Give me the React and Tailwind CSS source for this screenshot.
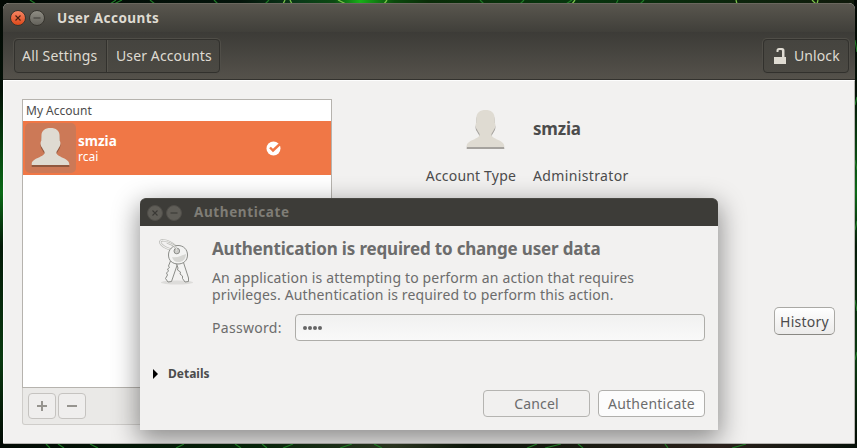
import React from "react";

function Wallpaper() {
  return (
    <svg className="absolute inset-0" width="857" height="448" viewBox="0 0 857 448" fill="none">
      <defs>
        <linearGradient id="top" x1="0" x2="1" y1="0" y2="0">
          <stop offset="0" stopColor="#020803" />
          <stop offset=".28" stopColor="#03130a" />
          <stop offset=".35" stopColor="#0a3a18" />
          <stop offset=".39" stopColor="#0c4a12" />
          <stop offset=".42" stopColor="#18b018" />
          <stop offset=".46" stopColor="#0a4a0c" />
          <stop offset=".5" stopColor="#0a2c08" />
          <stop offset=".66" stopColor="#06350d" />
          <stop offset="1" stopColor="#10190b" />
        </linearGradient>
        <linearGradient id="side" x1="0" x2="0" y1="0" y2="1">
          <stop offset="0" stopColor="#020803" />
          <stop offset=".2" stopColor="#031006" />
          <stop offset=".43" stopColor="#0b6a16" />
          <stop offset=".55" stopColor="#041a08" />
          <stop offset=".8" stopColor="#0a3a10" />
          <stop offset="1" stopColor="#020803" />
        </linearGradient>
        <linearGradient id="bottom" x1="0" x2="1" y1="0" y2="0">
          <stop offset="0" stopColor="#020a04" />
          <stop offset=".3" stopColor="#06240a" />
          <stop offset=".46" stopColor="#2a3420" />
          <stop offset=".55" stopColor="#0c160a" />
          <stop offset=".84" stopColor="#2a211b" />
          <stop offset="1" stopColor="#08120a" />
        </linearGradient>
      </defs>
      <path d="M0 0H857V448H0Z" fill="#071307" />
      <path d="M0 0H857V4H0Z" fill="url(#top)" />
      <path d="M0 0H4V448H0Z" fill="url(#side)" />
      <path d="M854 0H857V448H854Z" fill="url(#side)" />
      <path d="M0 444H857V448H0Z" fill="url(#bottom)" />
      <g stroke="#1f7a26" strokeWidth="1.2">
        <path d="M30 0l6 4M110 4l6-4M122 0l-8 4M150 0l5 4M214 0l4 4M265 4l4-4M480 0l4 4M520 4l4-4M566 4l6-4M618 0l-2 4M640 4l4-4" />
        <path d="M46 444l4 4M58 444l6 4M90 444l8 4M176 448l8-4M235 444l6 4M262 444l5 4M283 448l10-4M340 448l12-4M374 444l8 4M527 448l10-4M545 448l16-4M578 444l5 4M665 444l3 4M732 448l14-4" />
        <path d="M855 40l2 12M855 105l2-8M855 160l2 10M855 230l2-9M855 300l2 11M855 360l2-8" />
      </g>
      <g stroke="#7ac248" strokeWidth="1.3">
        <path d="M283 4l2-4M290 0l2 4M338 0l8 4M384 4l3-4M572 4l3-4M736 0l1 4M812 0l4 4M817 4l1-4" />
      </g>
    </svg>
  );
}

function WindowButton({ kind, tone }) {
  const styles = {
    orange: "bg-linear-to-b from-[#f68461] to-[#dd4814] border-[#37352f] text-[#4a2010]",
    gray: "bg-linear-to-b from-[#8f8d84] to-[#64625b] border-[#37352f] text-[#3c3b37]",
    dim: "bg-[#5f5d57] border-[#504e49] text-[#3a3935]",
  };
  return (
    <span className={"flex size-4 items-center justify-center rounded-full border " + styles[tone]}>
      <svg width="8" height="8" viewBox="0 0 8 8" stroke="currentColor" strokeWidth="1.1">
        {kind === "close" ? <path d="M1.5 1.5l5 5M6.5 1.5l-5 5" /> : <path d="M.5 4h7" />}
      </svg>
    </span>
  );
}

function Person({ shadow }) {
  const body =
    "M19.500 0C14 0 10.600 2.500 10.400 7.500L10.200 13C9.200 14 9.300 17.500 11 19.500C12 22 13.300 22.800 13.600 24.500C13.500 29.500 1.200 29.500 .7 36V37H38.300V36C37.800 29.500 25.500 29.500 25.400 24.500C25.700 22.800 27 22 28 19.500C29.700 17.500 29.800 14 28.800 13L28.600 7.500C28.400 2.500 25 0 19.500 0Z";
  return (
    <svg width="39" height="40" viewBox="0 0 39 40">
      <path d={body} transform="translate(0 2)" fill={shadow} />
      <path d={body} fill="#dfdbd2" />
    </svg>
  );
}

function Keys() {
  return (
    <svg width="40" height="48" viewBox="0 0 40 48" fill="none">
      <ellipse cx="19" cy="43.500" rx="16" ry="2" fill="#dddcda" />
      <ellipse cx="10" cy="6" rx="8.500" ry="3.300" transform="rotate(25 10 6)" stroke="#b9b9b5" strokeWidth="2.400" />
      <ellipse cx="10" cy="6" rx="8.500" ry="3.300" transform="rotate(25 10 6)" stroke="#eeeeec" strokeWidth="1.100" />
      <g stroke="#8b8c88" strokeWidth="1" strokeLinejoin="round">
        <path d="M12.500 22L10.500 27L11.500 28.500L9.500 30L10.500 32L8.500 34L9.500 36L7.500 39.500L10 43L13.500 42.500L19.500 25Z" fill="#f3f3f2" />
        <path d="M18.500 24.500L20 29L19.500 31L22.500 33L22 35L24.500 37L24.500 39.500L27 43L30.500 42.500L30.500 39L25 22Z" fill="#f3f3f2" />
        <path d="M20 6.500C14.500 6.500 10.500 10.500 10.500 16C10.500 21.500 14.500 25 20 25C25.500 25 29.500 21.500 29.500 16C29.500 10.500 25.500 6.500 20 6.500Z" fill="#f3f3f2" />
        <circle cx="18.800" cy="12" r="2.800" fill="#cfcfcc" />
      </g>
      <path d="M14 18C19 19.500 24 16 28 15C27.500 20.500 25 23 20 23C17 23 15 21 14 18Z" fill="#d6d6d3" />
      <path d="M9 3.500C15 5.500 19.500 8 18.800 12" stroke="#b5b5b0" strokeWidth="2.200" />
      <path d="M9 3.500C15 5.500 19.500 8 18.800 12" stroke="#f0f0ee" strokeWidth="1" />
    </svg>
  );
}

function MainWindow() {
  return (
    <div className="relative flex h-[441px] w-[852px] flex-col overflow-hidden rounded-t-[6px] rounded-b-[2px] bg-[#f2f1f0]">
      <header className="flex h-[29px] shrink-0 items-center border-t border-[#6a675e] bg-linear-to-b from-[#59564e] to-[#403f3a] pl-[7px]">
        <WindowButton kind="close" tone="orange" />
        <span className="w-[3px]" />
        <WindowButton kind="minimize" tone="gray" />
        <span className="ml-3 text-[13.5px] font-bold tracking-[0.44px] whitespace-nowrap text-[#dfdbd2]">User Accounts</span>
      </header>
      <nav className="flex h-12 shrink-0 items-center justify-between border-b border-[#33322e] bg-linear-to-b from-[#3c3b37] to-[#55524b] pr-[6px] pl-[11px] text-[14px] text-[#dfdbd2]">
        <div className="flex h-[34px] overflow-hidden rounded-[4px] border border-[#32312d] bg-linear-to-b from-[#45443f] to-[#4b4943] shadow-[0_0_0_1px_#504e48]">
          <span className="flex w-[92px] items-center border-r border-[#32312d] pl-[7px] tracking-[0.2px]">All Settings</span>
          <span className="flex w-[112px] items-center border-l border-[#56544d] pl-[8px] tracking-[0.12px]">User Accounts</span>
        </div>
        <div className="flex h-[34px] w-[86px] items-center rounded-[4px] border border-[#32312d] bg-linear-to-b from-[#45443f] to-[#4b4943] pl-[10px] shadow-[0_0_0_1px_#504e48]">
          <svg width="13" height="16" viewBox="0 0 13 16" fill="#dfdbd2">
            <path d="M0 9H12V16H0ZM2.500 4V2.500Q2.500 0 5 0H8Q10.500 0 10.500 2.500V9H8V3Q8 2 7 2H5.500Q4.500 2 4.500 3V4Z" />
          </svg>
          <span className="ml-[7px] tracking-[0.1px]">Unlock</span>
        </div>
      </nav>
      <main className="flex min-h-0 flex-1 border border-t-[#fdfdfd] border-r-[#b8b6b3] border-b-[#b8b6b3] border-l-[#fdfdfd] pt-[18px] pl-[18px]">
        <section className="w-[310px] shrink-0">
          <div className="h-[289px] border border-[#b6b3ae] bg-white">
            <div className="h-[21px] pl-[3px] text-[12px] leading-[21px] text-[#4c4c4c]">My Account</div>
            <div className="flex h-[54px] items-center bg-[#f07746] text-white">
              <div className="ml-[2px] flex h-[50px] w-[51px] items-center justify-center rounded-[5px] bg-[#cc7957]">
                <Person shadow="#90583f" />
              </div>
              <div className="ml-[2px] flex-1 pt-[2px]">
                <div className="text-[13.5px] leading-[16px] font-bold">smzia</div>
                <div className="text-[12px] leading-[16px]">rcai</div>
              </div>
              <svg className="mr-[50px]" width="15" height="15" viewBox="0 0 15 15">
                <circle cx="7.500" cy="7.500" r="7" fill="#fff" />
                <path d="M4 6.500L7 9.500L14.500 2.500" fill="none" stroke="#f07746" strokeWidth="2.400" />
              </svg>
            </div>
          </div>
          <div className="flex h-[37px] gap-[2px] rounded-b-[3px] border border-t-0 border-[#cfcdca] bg-[#eae9e7] pt-[5px] pl-[5px]">
            <span className="flex h-[26px] w-7 items-center justify-center rounded-[4px] border border-[#c5c3c0] bg-[#efeeed]">
              <svg width="10" height="10" viewBox="0 0 10 10" fill="#96948f"><path d="M0 4H4V0H6V4H10V6H6V10H4V6H0Z" /></svg>
            </span>
            <span className="flex h-[26px] w-7 items-center justify-center rounded-[4px] border border-[#c5c3c0] bg-[#efeeed]">
              <svg width="10" height="10" viewBox="0 0 10 10" fill="#96948f"><path d="M0 4H10V6H0Z" /></svg>
            </span>
          </div>
        </section>
        <section className="flex flex-1 flex-col pr-[19px] text-[#4c4c4c]">
          <div className="flex h-[58px] pt-[11px] pl-[134px]">
            <Person shadow="#a5a29e" />
            <span className="ml-[28px] pt-px text-[17px] leading-9 font-bold tracking-[-0.2px]">smzia</span>
          </div>
          <div className="flex h-9 items-center text-[14px] whitespace-nowrap">
            <span className="w-[184px] text-right tracking-[0.18px]">Account Type</span>
            <span className="ml-[17px] tracking-[0.36px]">Administrator</span>
          </div>
          <span className="mt-[114px] flex h-7 w-[61px] items-center justify-center self-end rounded-[5px] border border-[#aaa9a5] border-b-[#898883] bg-linear-to-b from-white to-[#ecebea] text-[14px] tracking-[0.25px]">History</span>
        </section>
      </main>
    </div>
  );
}

function AuthDialog() {
  return (
    <div className="absolute top-[198px] left-[140px] flex h-[232px] w-[578px] flex-col rounded-t-[6px] bg-[#f2f1f0] text-[14px] text-[#6c6c6c] shadow-[0_8px_26px_2px_rgba(0,0,0,0.42)]">
      <header className="flex h-7 shrink-0 items-center rounded-t-[6px] border-t border-[#494843] bg-[#3d3c38] pl-[7px]">
        <WindowButton kind="close" tone="dim" />
        <span className="w-[3px]" />
        <WindowButton kind="minimize" tone="dim" />
        <span className="ml-3 text-[13.5px] font-bold tracking-[0.6px] text-[#7f7d76]">Authenticate</span>
      </header>
      <div className="flex flex-1 flex-col pr-[13px] pl-3">
        <div className="flex">
          <div className="w-[60px] shrink-0 pt-[13px] pl-[6px]"><Keys /></div>
          <div className="flex-1 whitespace-nowrap">
            <h1 className="pt-[10px] text-[17px] leading-[26px] font-bold tracking-[-0.17px]">Authentication is required to change user data</h1>
            <p className="pt-[7px] leading-[17px] tracking-[0.15px]">
              An application is attempting to perform an action that requires
              <br />
              privileges. Authentication is required to perform this action.
            </p>
            <div className="mt-[11px] flex h-[27px] items-center">
              <span className="w-[83px] tracking-[0.3px]">Password:</span>
              <div className="flex h-[27px] flex-1 items-center gap-[1px] rounded-[4px] border border-[#aeada9] bg-linear-to-b from-[#f1f1f0] to-[#f9f9f9] pl-[7px]">
                <i className="size-1 rounded-full bg-[#666]" />
                <i className="size-1 rounded-full bg-[#666]" />
                <i className="size-1 rounded-full bg-[#666]" />
                <i className="size-1 rounded-full bg-[#666]" />
              </div>
            </div>
          </div>
        </div>
        <div className="mt-[25px] flex h-4 items-center text-[12px] font-bold text-[#4c4c4c]">
          <svg className="mr-[10px] ml-px" width="5" height="10" viewBox="0 0 5 10"><path d="M0 0L5 5L0 10Z" fill="#000" /></svg>
          Details
        </div>
        <div className="mt-[8px] flex h-[27px] justify-end gap-2">
          <span className="flex w-[107px] items-center justify-center rounded-[4px] border border-[#b5b4b1] bg-[#f1f0ef] tracking-[0.15px]">Cancel</span>
          <span className="flex w-[107px] items-center justify-center rounded-[4px] border border-[#b0afac] bg-[#fcfcfc] tracking-[0.25px]">Authenticate</span>
        </div>
      </div>
    </div>
  );
}

export default function App() {
  return (
    <div className="relative h-[448px] w-[857px] overflow-hidden bg-[#071307] font-['Noto_Sans','Open_Sans',sans-serif]">
      <Wallpaper />
      <div className="relative h-[444px] w-[857px] overflow-hidden pt-[3px] pl-[3px]">
        <MainWindow />
        <AuthDialog />
      </div>
    </div>
  );
}
